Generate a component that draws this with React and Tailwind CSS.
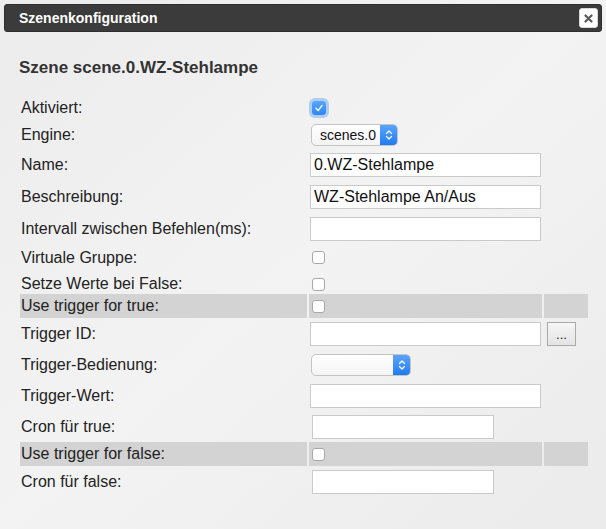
import React from "react";

const COLS = "grid grid-cols-[287px_233px_44px] gap-x-[2px]";

function Check({ checked }) {
  if (checked) {
    return (
      <span className="ml-[3px] flex h-[14px] w-[14px] items-center justify-center rounded-[3px] bg-gradient-to-b from-[#5aa5fb] to-[#2f86f2] shadow-[0_0_0_3px_rgba(120,175,240,0.55)]">
        <svg width="10" height="10" viewBox="0 0 10 10">
          <path d="M2 5.2 L4.2 7.4 L8 2.6" fill="none" stroke="white" strokeWidth="1.4" strokeLinecap="round" strokeLinejoin="round" />
        </svg>
      </span>
    );
  }
  return <span className="ml-[3px] block h-[13px] w-[13px] rounded-[3px] border border-[#a8a8a8] bg-white" />;
}

function Select({ value, width }) {
  return (
    <div className={`ml-[2px] flex h-[22px] items-stretch overflow-hidden rounded-[5px] border border-[#c4c4c4] bg-gradient-to-b from-white to-[#f4f4f4] ${width}`}>
      <span className="flex-1 pl-[8px] text-[14px] leading-[20px] text-[#111]">{value}</span>
      <span className="flex w-[17px] items-center justify-center bg-gradient-to-b from-[#5aa5fb] to-[#1f7bf0]">
        <svg width="8" height="12" viewBox="0 0 8 12">
          <path d="M1.5 4.5 L4 2 L6.5 4.5 M1.5 7.5 L4 10 L6.5 7.5" fill="none" stroke="white" strokeWidth="1.3" strokeLinecap="round" strokeLinejoin="round" />
        </svg>
      </span>
    </div>
  );
}

function Field({ value = "", short }) {
  return (
    <input
      readOnly
      value={value}
      className={`h-[24px] border border-[#cacaca] bg-white px-[3px] text-[16px] text-[#111] outline-none ${short ? "ml-[3px] w-[182px]" : "ml-[1px] w-[231px]"}`}
    />
  );
}

const rows = [
  { label: "Aktiviert:", h: "h-[23px]", el: <Check checked /> },
  { label: "Engine:", h: "h-[28px]", el: <Select value="scenes.0" width="w-[87px]" /> },
  { label: "Name:", h: "h-[28px]", el: <Field value="0.WZ-Stehlampe" /> },
  { label: "Beschreibung:", h: "h-[32px]", el: <Field value="WZ-Stehlampe An/Aus" /> },
  { label: "Intervall zwischen Befehlen(ms):", h: "h-[28px]", el: <Field /> },
  { label: "Virtuale Gruppe:", h: "h-[25px]", el: <Check /> },
  { label: "Setze Werte bei False:", h: "h-[20px]", el: <Check /> },
  { label: "Use trigger for true:", h: "h-[21px]", el: <Check />, band: true },
  {
    label: "Trigger ID:",
    h: "h-[34px]",
    el: <Field />,
    extra: (
      <button className="ml-[3px] flex h-[24px] w-[29px] items-center justify-center border border-[#a9a9a9] bg-gradient-to-b from-[#f6f6f6] to-[#e4e4e4] text-[13px] leading-none text-[#222]">
        ...
      </button>
    ),
  },
  { label: "Trigger-Bedienung:", h: "h-[24px]", el: <Select value="" width="w-[100px]" /> },
  { label: "Trigger-Wert:", h: "h-[33px]", el: <Field /> },
  { label: "Cron für true:", h: "h-[26px]", el: <Field short /> },
  { label: "Use trigger for false:", h: "h-[22px]", el: <Check />, band: true },
  { label: "Cron für false:", h: "h-[31px]", el: <Field short /> },
];

export default function App() {
  return (
    <div className="h-[529px] w-[606px] overflow-hidden bg-gradient-to-br from-[#ececec] via-[#f3f3f3] to-[#ebebeb] p-[4px] font-['Liberation_Sans',Arial,sans-serif]">
      <div className="flex h-[28px] items-center justify-between rounded-[3px] border border-[#2e2e2e] bg-[#3b3b3b] pl-[14px] pr-[3px]">
        <span className="text-[14px] font-bold text-white">Szenenkonfiguration</span>
        <button className="flex h-[20px] w-[19px] items-center justify-center rounded-[3px] border border-[#d8d8d8] bg-white">
          <svg width="9" height="9" viewBox="0 0 9 9">
            <path d="M1.5 1.5 L7.5 7.5 M7.5 1.5 L1.5 7.5" stroke="#5a5a5a" strokeWidth="2.2" strokeLinecap="round" />
          </svg>
        </button>
      </div>

      <h2 className="ml-[15px] mt-[26px] text-[17px] font-bold leading-[20px] text-[#333]">Szene scene.0.WZ-Stehlampe</h2>

      <div className="ml-[16px] mt-[18px] flex flex-col gap-y-[2px]">
        {rows.map((r) => (
          <div key={r.label} className={`${COLS} ${r.h}`}>
            <div className={`flex items-center pl-[1px] text-[16px] text-[#222] ${r.band ? "bg-[#d3d3d3]" : ""}`}>{r.label}</div>
            <div className={`flex items-center ${r.band ? "bg-[#d3d3d3]" : ""}`}>{r.el}</div>
            <div className={`flex items-center ${r.band ? "bg-[#d3d3d3]" : ""}`}>{r.extra}</div>
          </div>
        ))}
      </div>
    </div>
  );
}
